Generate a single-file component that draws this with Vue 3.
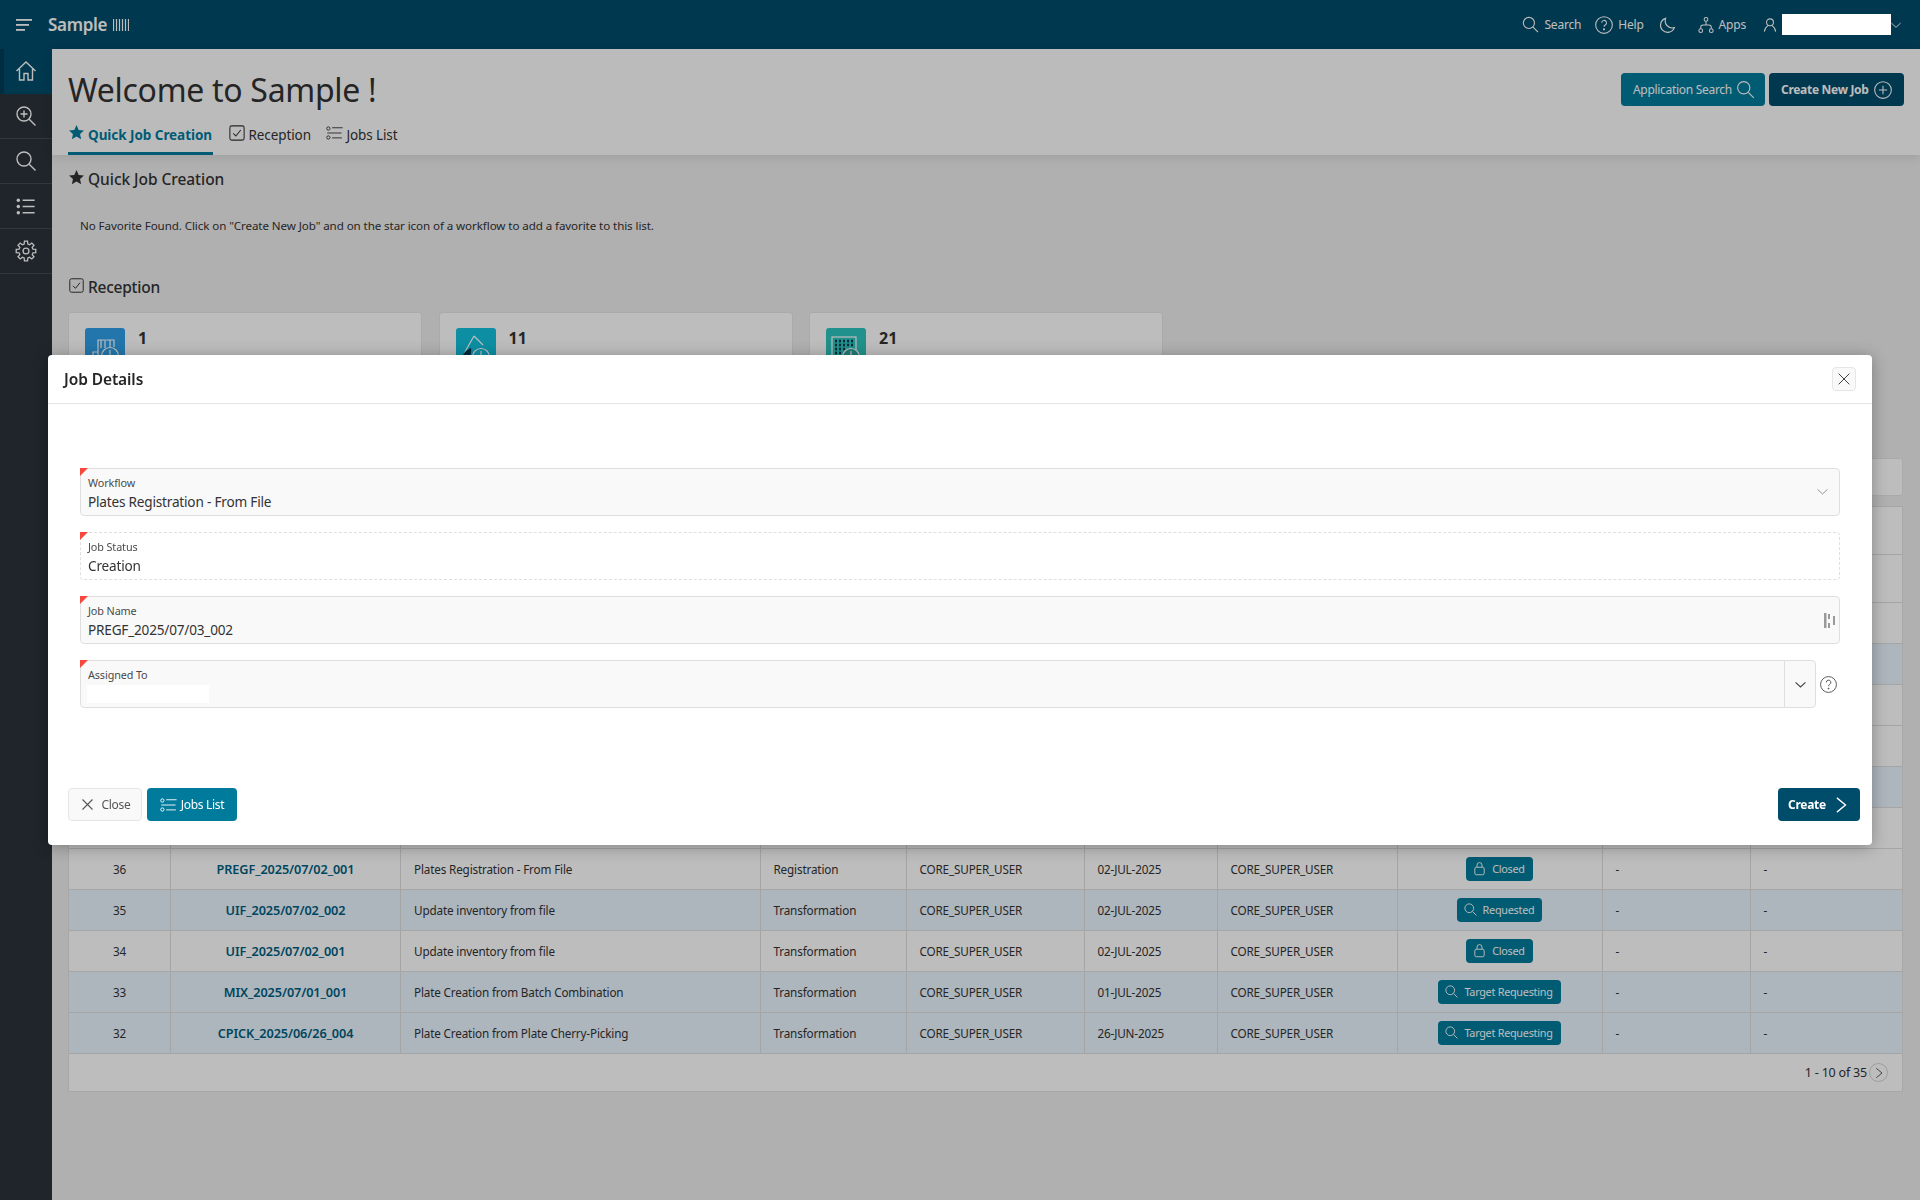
<script setup>
import { h } from 'vue'

function gearPath() {
  let d = ''
  for (let i = 0; i < 8; i++) {
    const a = (i * 45 * Math.PI) / 180
    const pts = [[-15, 7.8], [-9, 10.8], [9, 10.8], [15, 7.8]].map(([o, r]) => {
      const t = a + (o * Math.PI) / 180
      return (12 + r * Math.cos(t)).toFixed(2) + ' ' + (12 + r * Math.sin(t)).toFixed(2)
    })
    d += (i === 0 ? 'M' : 'L') + pts.join('L')
  }
  return d + 'Z'
}

const paths = {
  search: '<circle cx="10" cy="10" r="7"/><path d="M15.2 15.2 21.5 21.5"/>',
  zoom: '<circle cx="10" cy="10" r="7"/><path d="M15.2 15.2 21.5 21.5M10 6.5v7M6.5 10h7"/>',
  home: '<path d="M2.5 12 12 3l9.5 9M5.5 10v11h4.5v-6.5h4V21h4.5V10"/>',
  bullets: '<circle cx="4.5" cy="5.5" r="1.8" fill="currentColor" stroke="none"/><circle cx="4.5" cy="12" r="1.8" fill="currentColor" stroke="none"/><circle cx="4.5" cy="18.5" r="1.8" fill="currentColor" stroke="none"/><path d="M9 5.5h12.5M9 12h12.5M9 18.5h12.5"/>',
  gear: '<path d="' + gearPath() + '"/><circle cx="12" cy="12" r="3.2"/>',
  help: '<circle cx="12" cy="12" r="10"/><path d="M9.2 9.4a2.9 2.9 0 1 1 4.3 2.5c-1 .6-1.5 1.1-1.5 2.3"/><circle cx="12" cy="17.2" r=".6" fill="currentColor"/>',
  moon: '<path d="M20.5 15.5A9.5 9.5 0 0 1 8.8 3.2 9.5 9.5 0 1 0 20.5 15.5Z"/>',
  apps: '<circle cx="12" cy="4.5" r="2.5"/><circle cx="5" cy="19.5" r="2.5"/><circle cx="19" cy="19.5" r="2.5"/><path d="M12 7v5M5 17v-2a3 3 0 0 1 3-3h8a3 3 0 0 1 3 3v2"/>',
  user: '<circle cx="12" cy="8" r="5.2"/><path d="M3.5 22c.5-5 3-7.5 5.5-9M20.5 22c-.5-5-3-7.5-5.5-9"/>',
  plus: '<circle cx="12" cy="12" r="10"/><path d="M12 7v10M7 12h10"/>',
  star: '<path fill="currentColor" stroke="none" d="M12 1.5l3.1 6.9 7.4.8-5.5 5 1.5 7.3L12 17.8l-6.5 3.7L7 14.2l-5.5-5 7.4-.8z"/>',
  check: '<rect x="2.5" y="2.5" width="19" height="19" rx="2.5"/><path d="M7 12.5l3.5 3.5 6.5-8"/>',
  jobs: '<circle cx="4.5" cy="6" r="2.2"/><circle cx="4.5" cy="18" r="2.2"/><path d="M9.5 5h14M3 12h19M9.5 18.5h13"/>',
  lock: '<rect x="4.5" y="10" width="15" height="12" rx="2.5"/><path d="M8 10V6.5a4 4 0 0 1 8 0V10"/>',
  down: '<path d="M5 9l7 6.5L19 9"/>',
  right: '<path d="M6.5 2.5 18 12 6.5 21.5"/>',
  close: '<path d="M4 4l16 16M20 4 4 20"/>',
}

const Icon = (props) =>
  h('svg', {
    viewBox: '0 0 24 24',
    width: props.size,
    height: props.size,
    fill: 'none',
    stroke: 'currentColor',
    'stroke-width': props.sw || 1.6,
    innerHTML: paths[props.name],
  })
Icon.props = ['name', 'size', 'sw']

const sideItems = [
  { name: 'home', active: true, size: 24 },
  { name: 'zoom', size: 24 },
  { name: 'search', size: 24 },
  { name: 'bullets', size: 23 },
  { name: 'gear', size: 22 },
]

const cards = [
  { n: '1', cls: 'c1', art: 'build' },
  { n: '11', cls: 'c2', art: 'drop' },
  { n: '21', cls: 'c3', art: 'plate' },
]

const blank = { id: '', job: '', wf: '', type: '', by: '', date: '', upd: '', status: '', icon: '', a: '', b: '' }
const U = 'CORE_SUPER_USER'
const rows = [
  { ...blank },
  { ...blank, blue: true },
  { ...blank },
  { ...blank },
  { ...blank, blue: true },
  { ...blank },
  { id: '36', job: 'PREGF_2025/07/02_001', wf: 'Plates Registration - From File', type: 'Registration', by: U, date: '02-JUL-2025', upd: U, status: 'Closed', icon: 'lock', a: '-', b: '-' },
  { id: '35', job: 'UIF_2025/07/02_002', wf: 'Update inventory from file', type: 'Transformation', by: U, date: '02-JUL-2025', upd: U, status: 'Requested', icon: 'search', a: '-', b: '-', blue: true },
  { id: '34', job: 'UIF_2025/07/02_001', wf: 'Update inventory from file', type: 'Transformation', by: U, date: '02-JUL-2025', upd: U, status: 'Closed', icon: 'lock', a: '-', b: '-' },
  { id: '33', job: 'MIX_2025/07/01_001', wf: 'Plate Creation from Batch Combination', type: 'Transformation', by: U, date: '01-JUL-2025', upd: U, status: 'Target Requesting', icon: 'search', a: '-', b: '-', blue: true },
  { id: '32', job: 'CPICK_2025/06/26_004', wf: 'Plate Creation from Plate Cherry-Picking', type: 'Transformation', by: U, date: '26-JUN-2025', upd: U, status: 'Target Requesting', icon: 'search', a: '-', b: '-', blue: true },
]
const colWidths = [101.5, 230, 359.5, 146, 178, 133, 180, 205, 148, 152]
</script>

<template>
  <div class="app">
    <header class="topbar">
      <div class="brand">
        <svg class="burger" width="16" height="12" viewBox="0 0 16 12">
          <rect width="16" height="1.8" fill="currentColor" />
          <rect y="5" width="13" height="1.8" fill="currentColor" />
          <rect y="10" width="9" height="1.8" fill="currentColor" />
        </svg>
        <span class="logo">Sample</span>
        <svg class="bars" width="16" height="12" viewBox="0 0 16 12">
          <path d="M.5 0v12M3.5 0v12M6.5 0v12M9.5 0v12M12.5 0v12M15.5 0v12" stroke="currentColor" stroke-width="1.2" />
        </svg>
      </div>
      <nav class="topnav">
        <span class="tn tn-search"><Icon name="search" size="19" sw="1.4" />Search</span>
        <span class="tn tn-help"><Icon name="help" size="20" sw="1.3" />Help</span>
        <span class="tn tn-moon"><Icon name="moon" size="18" /></span>
        <span class="tn tn-apps"><Icon name="apps" size="18" sw="1.4" />Apps</span>
        <span class="tn tn-user"><Icon name="user" size="16" /></span>
        <span class="redact-top"></span>
        <Icon class="tn-chev" name="down" size="16" sw="1.4" />
      </nav>
    </header>

    <div class="shell">
      <aside class="sidebar">
        <div v-for="s in sideItems" :key="s.name" class="side-item" :class="{ active: s.active }">
          <Icon :name="s.name" :size="s.size" sw="1.4" />
        </div>
      </aside>

      <main class="main">
        <section class="band">
          <div class="band-top">
            <h1>Welcome to Sample !</h1>
            <div class="band-actions">
              <button class="btn teal">Application Search <Icon name="search" size="21" sw="1.3" /></button>
              <button class="btn navy strong">Create New Job <Icon name="plus" size="20" sw="1.3" /></button>
            </div>
          </div>
          <div class="tabs">
            <span class="tab on"><Icon name="star" size="17" />Quick Job Creation</span>
            <span class="tab"><Icon name="check" size="18" sw="1.4" />Reception</span>
            <span class="tab"><Icon name="jobs" size="18" sw="1.2" />Jobs List</span>
          </div>
        </section>

        <section class="content">
          <h2 class="sec first"><Icon name="star" size="17" />Quick Job Creation</h2>
          <p class="nofav">No Favorite Found. Click on "Create New Job" and on the star icon of a workflow to add a favorite to this list.</p>
          <h2 class="sec second"><Icon name="check" size="17" sw="1.4" />Reception</h2>
          <div class="cards">
            <div v-for="c in cards" :key="c.n" class="card">
              <span class="card-icon" :class="c.cls">
                <svg width="40" height="40" viewBox="0 0 40 40" fill="none" stroke="#fff" stroke-width="1.2">
                  <template v-if="c.art === 'build'">
                    <path d="M8 34V24h5v10M13 34V12h7v8M21 12h8v7M16 12v8M25 12v7M8 30h3" />
                    <rect x="9" y="28" width="3" height="6" fill="#003a52" stroke="none" />
                    <circle cx="25" cy="28" r="8.5" />
                    <path d="M25 22v8M21 29l4 3 4-3" />
                  </template>
                  <template v-else-if="c.art === 'drop'">
                    <path d="M18 8 27 17M18 8 10 22a9 9 0 0 0 2 12" />
                    <path d="M6 32c0-6 4-10 9-12 1 5-1 12-6 14Z" fill="#003a52" stroke="none" />
                    <circle cx="25" cy="29" r="8.5" />
                    <path d="M25 23v8M21 30l4 3 4-3" />
                  </template>
                  <template v-else>
                    <rect x="6" y="9" width="24" height="24" />
                    <path d="M9 13h2M13 13h2M17 13h2M21 13h2M25 13h2M9 17h2M13 17h2M17 17h2M21 17h2M25 17h2M9 21h2M13 21h2M17 21h2M9 25h2M13 25h2" stroke="#003a52" stroke-width="2.4" />
                    <circle cx="25" cy="29" r="8.5" fill="#2aa5a0" />
                    <path d="M25 23v8M21 30l4 3 4-3" />
                  </template>
                </svg>
              </span>
              <span class="card-n">{{ c.n }}</span>
            </div>
          </div>

          <div class="toolbar"></div>

          <div class="report">
            <table>
              <colgroup>
                <col v-for="(w, i) in colWidths" :key="i" :style="{ width: w + 'px' }" />
              </colgroup>
              <tbody>
                <tr class="head"><td v-for="i in 10" :key="i"></td></tr>
                <tr class="head"><td v-for="i in 10" :key="i"></td></tr>
                <tr v-for="(r, i) in rows" :key="i" :class="{ blue: r.blue }">
                  <td class="ctr">{{ r.id }}</td>
                  <td class="ctr link">{{ r.job }}</td>
                  <td>{{ r.wf }}</td>
                  <td>{{ r.type }}</td>
                  <td>{{ r.by }}</td>
                  <td>{{ r.date }}</td>
                  <td>{{ r.upd }}</td>
                  <td class="ctr">
                    <span v-if="r.status" class="badge"><Icon :name="r.icon" size="15" sw="1.5" />{{ r.status }}</span>
                  </td>
                  <td>{{ r.a }}</td>
                  <td>{{ r.b }}</td>
                </tr>
              </tbody>
            </table>
            <div class="pager">
              <span>1 - 10 of 35</span>
              <span class="pager-btn"><Icon name="right" size="12" /></span>
            </div>
          </div>
        </section>
      </main>
    </div>

    <div class="overlay"></div>

    <div class="modal">
      <div class="modal-head">
        <span class="modal-title">Job Details</span>
        <button class="x-btn"><Icon name="close" size="16" sw="1.4" /></button>
      </div>
      <div class="modal-body">
        <div class="field">
          <label>Workflow</label>
          <div class="val">Plates Registration - From File</div>
          <Icon class="f-chev" name="down" size="17" sw="1.3" />
        </div>
        <div class="field dashed">
          <label>Job Status</label>
          <div class="val">Creation</div>
        </div>
        <div class="field">
          <label>Job Name</label>
          <div class="val">PREGF_2025/07/03_002</div>
          <svg class="f-bars" width="12" height="15" viewBox="0 0 12 15">
            <rect x="0" y="0" width="2.5" height="15" fill="#9a9a9a" />
            <rect x="4" y="1" width="2" height="5" fill="#9a9a9a" />
            <rect x="4" y="10" width="2" height="5" fill="#9a9a9a" />
            <rect x="9" y="3" width="2" height="9" fill="#9a9a9a" />
          </svg>
        </div>
        <div class="assign-row">
          <div class="field assign">
            <div class="assign-main">
              <label>Assigned To</label>
              <div class="redact-val"></div>
            </div>
            <div class="assign-btn"><Icon name="down" size="17" sw="1.6" /></div>
          </div>
          <Icon class="help-ic" name="help" size="19" sw="1.1" />
        </div>
      </div>
      <div class="modal-foot">
        <button class="btn ghost"><Icon name="close" size="15" sw="1.7" />Close</button>
        <button class="btn cyan"><Icon name="jobs" size="18" sw="1.2" />Jobs List</button>
        <button class="btn dark strong create">Create <Icon name="right" size="18" sw="1.8" /></button>
      </div>
    </div>
  </div>
</template>

<style scoped>
.app {
  position: relative;
  width: 1920px;
  height: 1200px;
  overflow: hidden;
  font-family: "Noto Sans", "Open Sans", sans-serif;
  color: #333;
  background: #eee;
}
.topbar {
  height: 49px;
  background: #004c6b;
  color: #fff;
  display: flex;
  justify-content: space-between;
  align-items: center;
}
.brand { display: flex; align-items: center; padding-left: 16px; }
.burger { margin-right: 16px; }
.logo { font-size: 17px; font-weight: 600; letter-spacing: -0.3px; width: 65px; }
.topnav { display: flex; align-items: center; font-size: 12px; letter-spacing: -0.2px; }
.tn { display: inline-flex; align-items: center; gap: 4px; }
.tn-search { margin-right: 13px; }
.tn-help { margin-right: 15px; }
.tn-moon { margin-right: 20px; }
.tn-apps { margin-right: 16px; }
.tn-user { margin-right: 4px; }
.redact-top {
  width: 109px;
  height: 21px;
  background: #fff;
  position: relative;
  z-index: 20;
}
.tn-chev { margin: 0 16px 0 -3px; }

.shell { display: flex; height: 1151px; }
.sidebar { width: 52px; flex: none; background: #2a333a; color: #fff; }
.side-item {
  height: 45px;
  display: flex;
  align-items: center;
  justify-content: center;
  border-bottom: 1px solid #444d54;
  box-sizing: border-box;
  padding-right: 1px;
}
.side-item.active {
  background: #004c6b;
  border-bottom-color: #004c6b;
  border-left: 4px solid #003c56;
  padding-right: 4px;
}
.main { flex: 1; min-width: 0; }

.band {
  height: 106px;
  box-sizing: border-box;
  background: #fdfdfe;
  position: relative;
  box-shadow: 0 3px 10px rgba(0, 0, 0, 0.09);
  display: flex;
  flex-direction: column;
  justify-content: space-between;
  padding: 19px 16px 0;
}
.band-top { display: flex; justify-content: space-between; align-items: flex-start; }
h1 {
  margin: 0;
  font-size: 32px;
  line-height: 44px;
  font-weight: 400;
  letter-spacing: -0.3px;
  color: #333;
}
.band-actions { display: flex; gap: 4px; margin-top: 5px; }
.btn {
  height: 33px;
  box-sizing: border-box;
  border: 0;
  border-radius: 4px;
  font-family: inherit;
  font-size: 12px;
  letter-spacing: -0.3px;
  color: #fff;
  display: inline-flex;
  align-items: center;
  justify-content: center;
  gap: 5px;
  padding: 0;
}
.strong { font-weight: 700; }
.teal { background: #007b9c; width: 144px; justify-content: flex-start; padding-left: 12px; gap: 3px; }
.navy { background: #004c6b; width: 135px; justify-content: flex-start; padding-left: 12px; gap: 4px; }
.tabs { display: flex; height: 38px; font-size: 13.5px; letter-spacing: -0.1px; }
.tab {
  display: inline-flex;
  align-items: center;
  gap: 3px;
  box-sizing: border-box;
  padding-bottom: 2px;
  margin-right: 14.5px;
  color: #333;
}
.tab.on {
  color: #007b9c;
  font-weight: 700;
  border-bottom: 3px solid #007b9c;
  padding-bottom: 0;
  width: 145px;
  white-space: nowrap;
  letter-spacing: -0.05px;
  margin-right: 14.5px;
}
.tab svg { margin-top: -4px; }

.content { padding: 0 17px 0 16px; }
.sec {
  margin: 0;
  font-size: 15.5px;
  font-weight: 500;
  line-height: 24px;
  letter-spacing: -0.05px;
  display: flex;
  align-items: center;
  gap: 3px;
  color: #333;
}
.sec svg { margin-top: -3px; }
.sec.first { padding-top: 12px; }
.sec.second { margin-top: 40px; letter-spacing: -0.25px; }
.nofav {
  margin: 26px 0 0 12px;
  font-size: 11.6px;
  line-height: 18px;
  letter-spacing: -0.09px;
  color: #333;
}
.cards { display: flex; gap: 16.5px; margin-top: 13px; height: 100px; }
.card {
  width: 354px;
  height: 100px;
  box-sizing: border-box;
  background: #fff;
  border: 1px solid #e6e6e6;
  border-radius: 3px;
  padding: 15px 16px;
  display: flex;
  gap: 13px;
}
.card-icon { width: 40px; height: 40px; border-radius: 3px; display: block; }
.c1 { background: #2f9fe9; }
.c2 { background: #12c0dc; }
.c3 { background: #2cc4bd; }
.card-n { font-size: 16px; font-weight: 700; line-height: 21px; color: #333; }

.toolbar {
  height: 38px;
  margin-top: 46px;
  background: #fff;
  border: 1px solid #e6e6e6;
  border-radius: 3px;
  box-sizing: border-box;
}
.report { margin-top: 10px; background: #fff; border: 1px solid #e2e2e2; border-top: 0; box-sizing: border-box; }
table { width: 100%; table-layout: fixed; border-collapse: collapse; font-size: 11.7px; letter-spacing: -0.15px; }
tr { height: 41px; background: #fff; }
tr.head { height: 48px; }
tr.blue { background: #eaf5ff; }
td {
  border: 1px solid #dfdfdf;
  padding: 0 13px;
  white-space: nowrap;
  overflow: hidden;
  color: #333;
}
td:first-child { border-left: 0; }
td:last-child { border-right: 0; }
.ctr { text-align: center; }
.link { font-weight: 600; font-size: 12.7px; color: #005f7f; letter-spacing: -0.1px; }
.badge {
  display: inline-flex;
  align-items: center;
  gap: 5px;
  height: 24px;
  box-sizing: border-box;
  padding: 0 8px 1px 6px;
  border-radius: 4px;
  background: #007b9c;
  color: #fff;
  font-size: 10.8px;
  letter-spacing: -0.25px;
}
.pager {
  height: 37px;
  display: flex;
  justify-content: flex-end;
  align-items: center;
  gap: 2px;
  padding-right: 14px;
  font-size: 12.5px;
  letter-spacing: -0.2px;
  color: #333;
}
.pager-btn {
  width: 19px;
  height: 19px;
  border-radius: 50%;
  border: 1px solid #d6d6d6;
  box-sizing: border-box;
  display: flex;
  align-items: center;
  justify-content: center;
}

.overlay {
  position: fixed;
  inset: 0;
  background: rgba(0, 0, 0, 0.26);
  z-index: 10;
}
.modal {
  position: absolute;
  left: 48px;
  top: 355px;
  width: 1824px;
  height: 490px;
  background: #fff;
  border-radius: 4px;
  box-shadow: 0 2px 16px rgba(0, 0, 0, 0.3);
  z-index: 11;
  display: flex;
  flex-direction: column;
}
.modal-head {
  height: 49px;
  box-sizing: border-box;
  border-bottom: 1px solid #e6e6e6;
  display: flex;
  align-items: center;
  justify-content: space-between;
  padding: 0 16px;
}
.modal-title { font-size: 15.5px; font-weight: 600; letter-spacing: -0.1px; color: #262626; }
.x-btn {
  width: 24px;
  height: 24px;
  padding: 0;
  border: 1px solid #e6e6e6;
  border-radius: 4px;
  background: #f9f9f9;
  color: #333;
  display: flex;
  align-items: center;
  justify-content: center;
}
.modal-body {
  flex: 1;
  padding: 64px 32px 0;
  display: flex;
  flex-direction: column;
  gap: 16px;
}
.field {
  position: relative;
  height: 48px;
  box-sizing: border-box;
  background: #f9f9f9;
  border: 1px solid #dfdfdf;
  border-radius: 4px;
  padding: 7px 7px 0;
}
.field::before {
  content: "";
  position: absolute;
  left: -1px;
  top: -1px;
  width: 0;
  height: 0;
  border-top: 8px solid #f4493c;
  border-right: 8px solid transparent;
}
.field.dashed { background: #fff; border-style: dashed; }
label { display: block; font-size: 10.8px; line-height: 14px; letter-spacing: -0.1px; color: #4a4a4a; }
.val { margin-top: 2px; font-size: 13.6px; line-height: 20px; letter-spacing: -0.2px; color: #333; }
.f-chev { position: absolute; right: 8px; top: 14px; color: #8a8a8a; }
.f-bars { position: absolute; right: 3px; top: 16px; }
.assign-row { display: flex; align-items: center; }
.assign { width: 1736px; padding: 0; display: flex; }
.assign-main { flex: 1; padding: 7px 7px 0; }
.redact-val { width: 122px; height: 18px; margin: 3px 0 0 -1px; background: #fff; }
.assign-btn {
  width: 30px;
  border-left: 1px solid #dfdfdf;
  display: flex;
  align-items: center;
  justify-content: center;
  color: #444;
}
.help-ic { margin-left: 2.5px; color: #444; }
.modal-foot {
  display: flex;
  align-items: center;
  gap: 4.5px;
  padding: 0 12px 24px 20px;
}
.ghost { width: 74px; background: #f9f9f9; border: 1px solid #e6e6e6; color: #555; gap: 7px; }
.cyan { width: 90px; background: #007b9c; gap: 4px; }
.dark { background: #004c6b; }
.create { width: 82px; margin-left: auto; gap: 6px; }
</style>
